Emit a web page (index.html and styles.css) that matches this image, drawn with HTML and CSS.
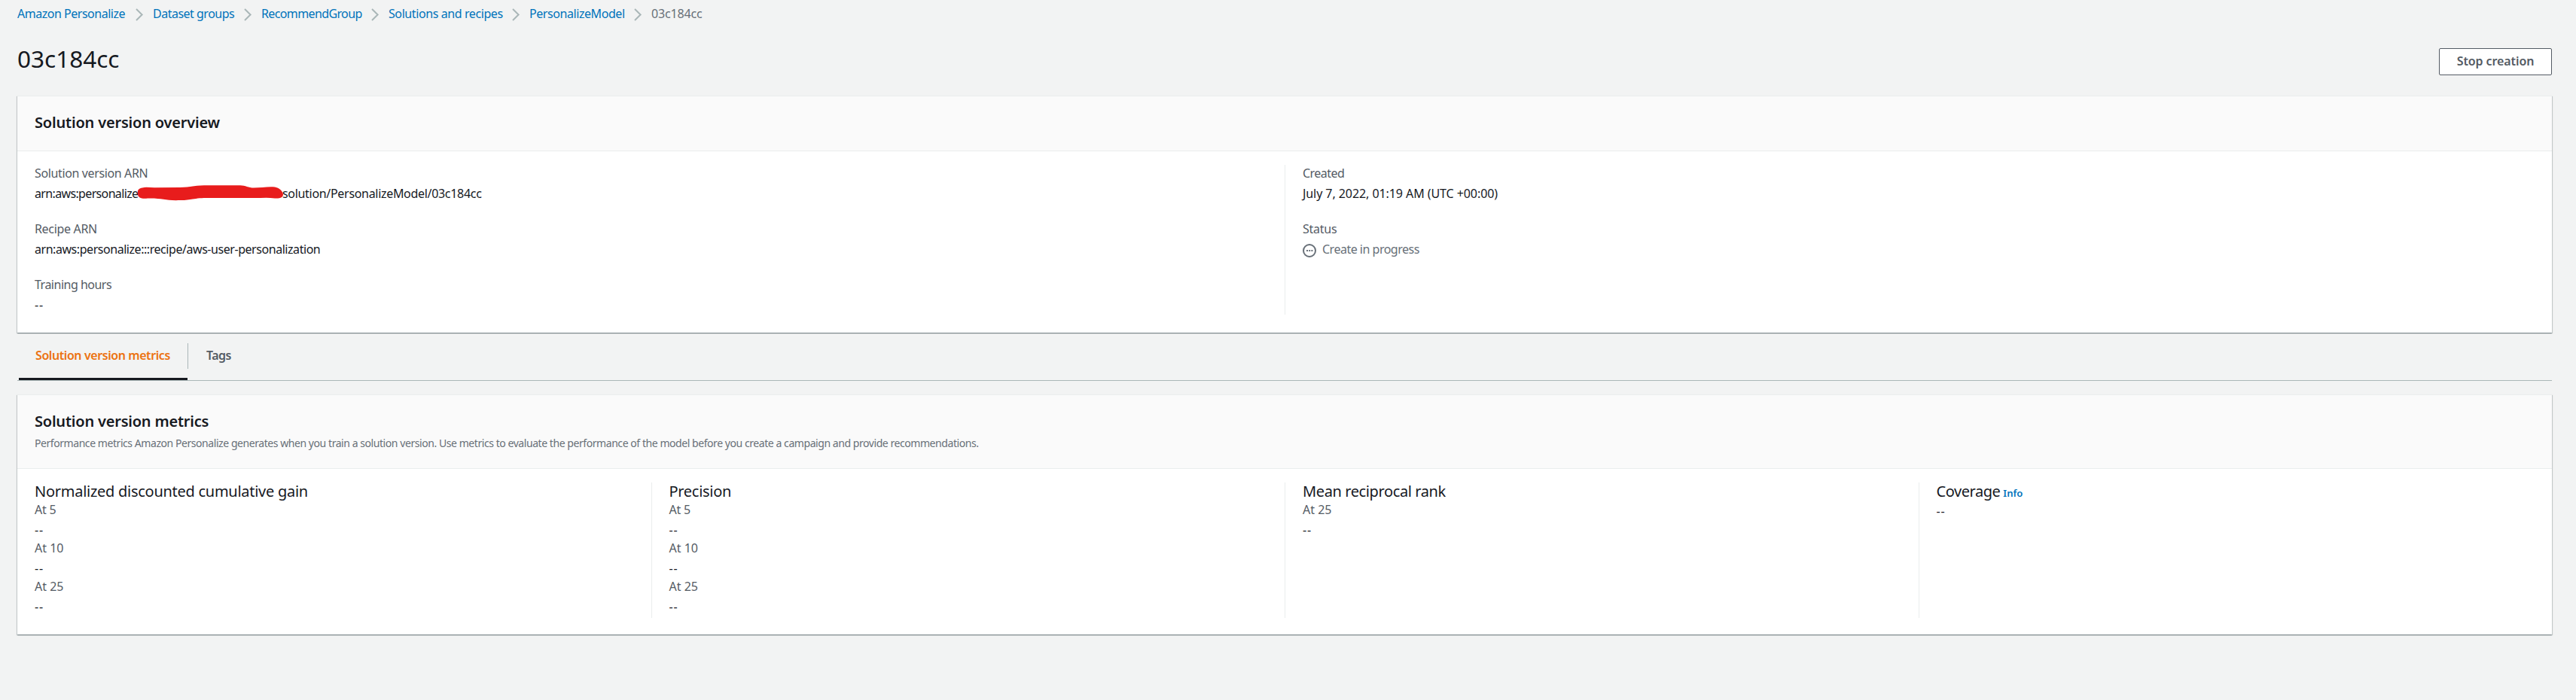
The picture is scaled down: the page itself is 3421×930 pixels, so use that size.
FILE: index.html
```
<!DOCTYPE html>
<html lang="en">
<head>
<meta charset="utf-8">
<title>03c184cc - Amazon Personalize</title>
<link rel="stylesheet" href="styles.css">
</head>
<body>
<nav class="crumbs">
  <a class="t-amazon">Amazon Personalize</a>
  <svg class="chev" viewBox="0 0 11 17"><path d="M1 1 8.6 8.5 1 16"/></svg>
  <a class="t-dataset">Dataset groups</a>
  <svg class="chev" viewBox="0 0 11 17"><path d="M1 1 8.6 8.5 1 16"/></svg>
  <a class="t-group">RecommendGroup</a>
  <svg class="chev" viewBox="0 0 11 17"><path d="M1 1 8.6 8.5 1 16"/></svg>
  <a class="t-solutions">Solutions and recipes</a>
  <svg class="chev" viewBox="0 0 11 17"><path d="M1 1 8.6 8.5 1 16"/></svg>
  <a class="t-model">PersonalizeModel</a>
  <svg class="chev" viewBox="0 0 11 17"><path d="M1 1 8.6 8.5 1 16"/></svg>
  <span class="t-version">03c184cc</span>
</nav>
<header class="page-head">
  <h1>03c184cc</h1>
  <button class="btn">Stop creation</button>
</header>
<section class="card">
  <div class="card-head"><h2>Solution version overview</h2></div>
  <div class="overview">
    <div class="col">
      <div class="field">
        <div class="label t-svarn">Solution version ARN</div>
        <div class="value arn"><span class="arn-start">arn:aws:personalize</span><span class="arn-end">solution/PersonalizeModel/03c184cc</span>
          <svg class="redact" viewBox="0 0 196 24"><path d="M2 13C1 8 3 5 8 4.500C13 3 19 4.500 25 4.300L58 4C72 3.500 77 1.500 90 1.300L138 1.200C145 1.200 149 4.500 156 4.500C165 4.500 176 2.500 184 3.500C190 4.500 195 9 195 14C194 18 190 19 184 18.500C175 17 166 18 157 18L97 18C77 17.500 74 21 59 21C38 22 36 18 15 18.500C8 19.500 2 18 2 13Z"/></svg>
        </div>
      </div>
      <div class="field">
        <div class="label t-recarn">Recipe ARN</div>
        <div class="value t-recipe">arn:aws:personalize:::recipe/aws-user-personalization</div>
      </div>
      <div class="field">
        <div class="label t-training">Training hours</div>
        <div class="value dash">--</div>
      </div>
    </div>
    <div class="col">
      <div class="field">
        <div class="label t-created">Created</div>
        <div class="value t-date">July 7, 2022, 01:19 AM (UTC +00:00)</div>
      </div>
      <div class="field">
        <div class="label t-status">Status</div>
        <div class="value status">
          <svg class="status-icon" viewBox="0 0 18 18"><circle cx="9" cy="9" r="8"/><path d="M5 9h2M8.200 9h2M11.400 9h2"/></svg>
          <span>Create in progress</span>
        </div>
      </div>
    </div>
  </div>
</section>
<div class="tabs">
  <div class="tab active"><span>Solution version metrics</span></div>
  <div class="tab second"><span>Tags</span></div>
</div>
<section class="card">
  <div class="card-head">
    <h2 class="t-metrics">Solution version metrics</h2>
    <p class="desc">Performance metrics Amazon Personalize generates when you train a solution version. Use metrics to evaluate the performance of the model before you create a campaign and provide recommendations.</p>
  </div>
  <div class="metrics">
    <div class="col">
      <h3 class="t-gain">Normalized discounted cumulative gain</h3>
      <div class="metric"><div class="label t-at5">At 5</div><div class="value dash">--</div></div>
      <div class="metric"><div class="label">At 10</div><div class="value dash">--</div></div>
      <div class="metric"><div class="label">At 25</div><div class="value dash">--</div></div>
    </div>
    <div class="col">
      <h3 class="t-precision">Precision</h3>
      <div class="metric"><div class="label t-at5">At 5</div><div class="value dash">--</div></div>
      <div class="metric"><div class="label">At 10</div><div class="value dash">--</div></div>
      <div class="metric"><div class="label">At 25</div><div class="value dash">--</div></div>
    </div>
    <div class="col">
      <h3 class="t-rank">Mean reciprocal rank</h3>
      <div class="metric"><div class="label">At 25</div><div class="value dash">--</div></div>
    </div>
    <div class="col">
      <h3 class="t-coverage">Coverage<a class="info">Info</a></h3>
      <div class="metric"><div class="value dash">--</div></div>
    </div>
  </div>
</section>
</body>
</html>
```
FILE: styles.css
```
* { box-sizing: border-box; }
body {
  margin: 0;
  min-height: 930px;
  padding: 7px 32px 0 23px;
  background: #f2f3f3;
  color: #16191f;
  font: 16px/22px "Noto Sans", "Open Sans", sans-serif;
}
h1, h2, h3, p { margin: 0; }

.crumbs { display: flex; align-items: flex-start; height: 22px; white-space: nowrap; }
.crumbs a { color: #0073bb; }
.crumbs span { color: #687078; }
.chev { width: 11px; height: 17px; margin: 4px 12px 0 13px; flex: none; }
.chev path { fill: none; stroke: #aab7b8; stroke-width: 2; }
.t-amazon { width: 144px; letter-spacing: -.48px; }
.t-dataset { width: 108px; letter-spacing: -.5px; }
.t-group { width: 133px; letter-spacing: -.62px; }
.t-solutions { width: 151px; letter-spacing: -.41px; }
.t-model { width: 126px; letter-spacing: -.43px; }
.t-version { letter-spacing: -.16px; }

.page-head { display: flex; justify-content: space-between; height: 98px; padding-top: 27px; }
h1 { height: 43px; font-size: 31.5px; font-weight: 400; line-height: 43px; }
.btn {
  width: 150px;
  height: 36px;
  margin-top: 8px;
  padding: 0 0 2px;
  border: 1px solid #545b64;
  border-radius: 2px;
  background: #fff;
  color: #545b64;
  font: 600 16px/22px "Noto Sans", "Open Sans", sans-serif;
  letter-spacing: -.09px;
}

.card {
  background: #fff;
  border-top: 1px solid #eaeded;
  box-shadow: 0 1px 1px 0 rgba(0, 28, 36, .3), 1px 1px 1px 0 rgba(0, 28, 36, .15), -1px 1px 1px 0 rgba(0, 28, 36, .15);
}
.card-head { padding: 20px 23px 22px; background: #fafafa; border-bottom: 1px solid #eaeded; }
h2 { font-size: 20px; font-weight: 600; line-height: 30px; letter-spacing: -.19px; }
.t-metrics { letter-spacing: -.21px; }
.desc { margin: 4px 0 1px; color: #687078; font-size: 14px; line-height: 20px; letter-spacing: -.438px; }

.overview { display: grid; grid-template-columns: 1fr 1fr; padding: 18px 0 24px; }
.metrics { display: grid; grid-template-columns: repeat(4, 1fr); padding: 18px 0 22px; }
.col { padding-left: 23px; }
.col + .col { border-left: 1px solid #eaeded; }
.overview .col { height: 199px; }
.metrics .col { height: 180px; }
.field { height: 74px; }
.label { color: #545b64; }
.value { margin-top: 5px; white-space: nowrap; }
.dash { letter-spacing: .9px; color: #16191f; }

.arn { position: relative; display: flex; }
.arn-start { width: 329px; letter-spacing: -.65px; }
.arn-end { letter-spacing: -.31px; }
.redact { position: absolute; left: 135px; top: -1px; width: 196px; height: 24px; fill: #e81c1c; }
.t-svarn { letter-spacing: -.37px; }
.t-recarn { letter-spacing: -.33px; }
.t-recipe { letter-spacing: -.45px; }
.t-training { letter-spacing: -.5px; }
.t-created { letter-spacing: -.53px; }
.t-date { letter-spacing: -.07px; }
.t-status { letter-spacing: -.24px; }
.status { display: flex; gap: 8px; color: #687078; letter-spacing: -.5px; }
.status-icon { width: 18px; height: 18px; margin-top: 4px; fill: none; stroke: #687078; stroke-width: 2; }

.tabs { display: flex; height: 64px; margin-bottom: 18px; padding-left: 2px; border-bottom: 1px solid #aab7b8; font-weight: 600; }
.tab { height: 63px; padding: 19px 22px 0; color: #545b64; white-space: nowrap; }
.tab.active { width: 224px; border-bottom: 3px solid #16191f; color: #ec7211; letter-spacing: -.42px; }
.tab.second { height: 34px; margin-top: 14px; padding: 5px 24px 0; border-left: 1px solid #aab7b8; letter-spacing: -.57px; }

h3 { height: 22px; margin-bottom: 3px; font-size: 20px; font-weight: 400; line-height: 23px; white-space: nowrap; }
.metric { height: 51px; }
.t-gain { letter-spacing: -.27px; }
.t-precision { letter-spacing: -.3px; }
.t-rank { letter-spacing: -.39px; }
.t-coverage { margin-bottom: 0; letter-spacing: -.45px; }
.t-at5 { letter-spacing: -.22px; }
.info { margin-left: 4px; color: #0073bb; font-size: 13px; font-weight: 600; letter-spacing: 0; }
```
